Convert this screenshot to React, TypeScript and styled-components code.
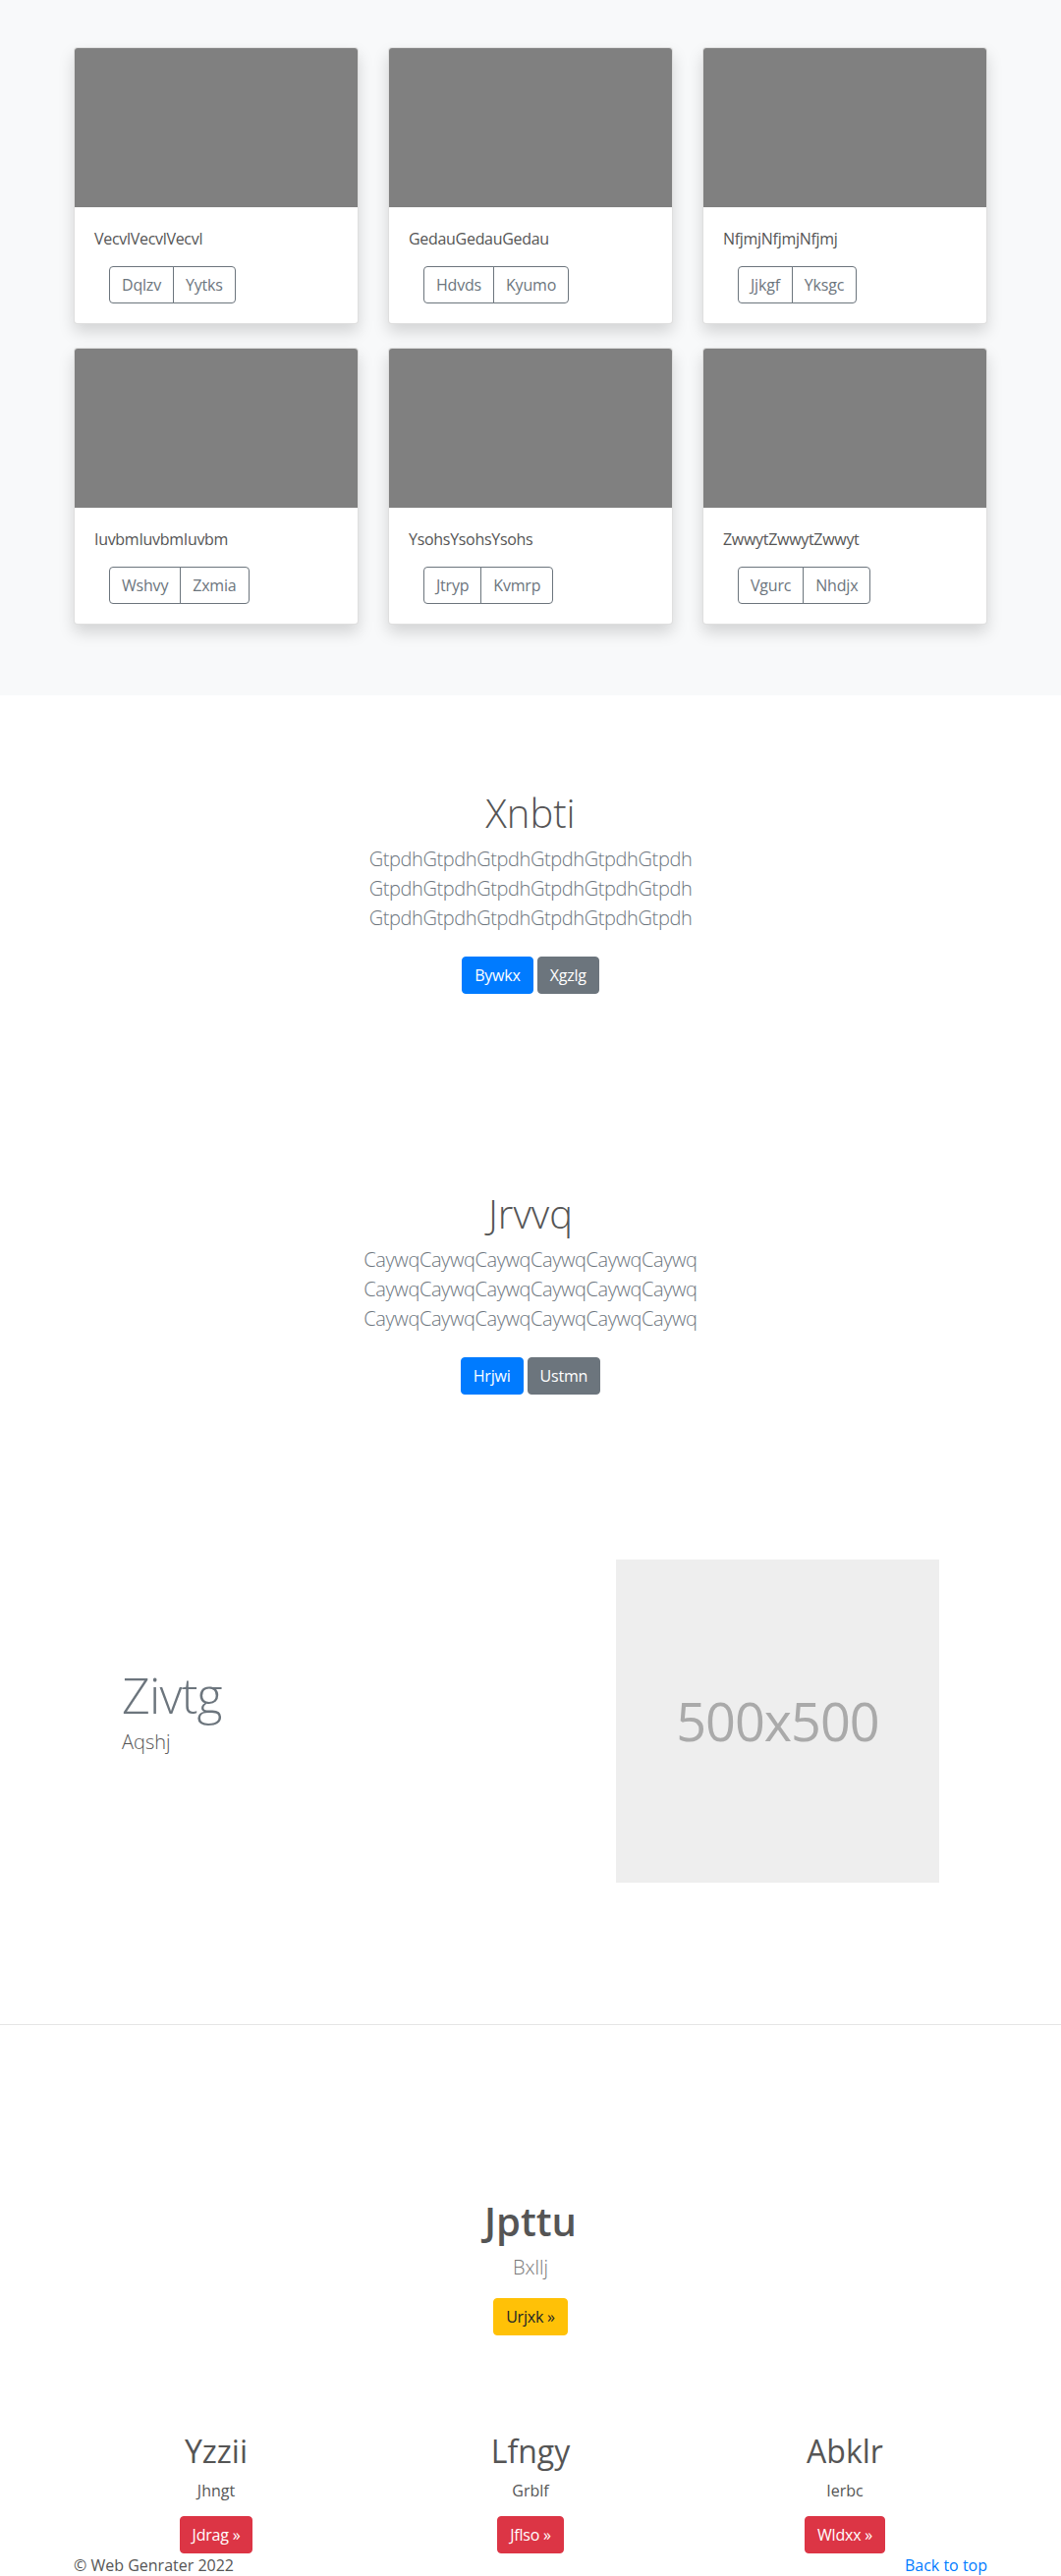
import React from "react";
import styled, { createGlobalStyle } from "styled-components";

const GlobalStyle = createGlobalStyle`
  html, body { margin: 0; padding: 0; background: #fff; }
  body {
    font-family: "Open Sans", "Noto Sans", "Liberation Sans", sans-serif;
    font-size: 16px;
    line-height: 1.5;
    color: #555;
  }
  * { box-sizing: border-box; }
`;

const Page = styled.div`
  display: flex;
  flex-direction: column;
`;

const Album = styled.section`
  background: #f8f9fa;
  padding: 48px 0 72px;
`;

const Container = styled.div`
  width: 100%;
  max-width: 960px;
  margin: 0 auto;
  padding: 0 15px;
`;

const CardGrid = styled.div`
  display: grid;
  grid-template-columns: repeat(3, 1fr);
  column-gap: 30px;
  row-gap: 24px;
`;

const Card = styled.div`
  display: flex;
  flex-direction: column;
  background: #fff;
  border: 1px solid rgba(0, 0, 0, 0.125);
  border-radius: 4px;
  overflow: hidden;
  box-shadow: 0 8px 16px rgba(0, 0, 0, 0.15);
`;

const CardImage = styled.div`
  height: 162px;
  background: #808080;
`;

const CardBody = styled.div`
  padding: 20px;
`;

const CardText = styled.p`
  margin: 0 0 16px;
  font-size: 16px;
  line-height: 24px;
  letter-spacing: -0.3px;
  color: #555;
`;

const BtnGroup = styled.div`
  display: inline-flex;
  margin-left: 15px;
`;

const GroupButton = styled.button`
  font-family: inherit;
  font-size: 16px;
  line-height: 24px;
  padding: 6px 12px;
  letter-spacing: -0.2px;
  background: transparent;
  color: #6c757d;
  border: 1px solid #6c757d;
  border-radius: 0;
  &:first-child {
    border-radius: 4px 0 0 4px;
  }
  &:last-child {
    border-radius: 0 4px 4px 0;
    margin-left: -1px;
  }
`;

const Hero = styled.section`
  padding: 96px 0;
  text-align: center;
`;

const HeroTitle = styled.h1`
  margin: 0 0 8px;
  font-size: 40px;
  font-weight: 300;
  line-height: 1.2;
  color: #555;
`;

const Lead = styled.p`
  margin: 0 0 16px;
  font-size: 20px;
  font-weight: 300;
  line-height: 30px;
  letter-spacing: -0.4px;
  color: #6c757d;
`;

const ButtonRow = styled.div`
  display: flex;
  justify-content: center;
  gap: 4px;
  padding: 8px 0;
`;

const variants: Record<string, { bg: string; fg: string }> = {
  primary: { bg: "#007bff", fg: "#fff" },
  secondary: { bg: "#6c757d", fg: "#fff" },
  warning: { bg: "#ffc107", fg: "#212529" },
  danger: { bg: "#dc3545", fg: "#fff" },
};

const Button = styled.a<{ $variant: string }>`
  display: inline-block;
  font-size: 16px;
  line-height: 24px;
  padding: 6px 12px;
  letter-spacing: -0.2px;
  border-radius: 4px;
  border: 1px solid ${(p) => variants[p.$variant].bg};
  background: ${(p) => variants[p.$variant].bg};
  color: ${(p) => variants[p.$variant].fg};
  text-decoration: none;
`;

const Featurette = styled.section`
  padding: 64px 0;
`;

const FeatureRow = styled.div`
  width: 862px;
  margin: 0 auto;
  display: grid;
  grid-template-columns: 7fr 5fr;
  align-items: center;
`;

const FeatureText = styled.div`
  padding: 0 15px;
`;

const FeatureHeading = styled.h2`
  margin: 0 0 8px;
  font-size: 50px;
  font-weight: 300;
  line-height: 1;
  letter-spacing: -0.8px;
  color: #6c757d;
`;

const FeatureLead = styled.p`
  margin: 0 0 16px;
  font-size: 20px;
  font-weight: 300;
  line-height: 30px;
  color: #555;
`;

const FeatureMedia = styled.div`
  padding: 0 15px;
`;

const Placeholder = styled.div`
  aspect-ratio: 1 / 1;
  width: 100%;
  background: #eee;
  color: #aaa;
  display: flex;
  align-items: center;
  justify-content: center;
  font-size: 54px;
  letter-spacing: -1px;
`;

const Divider = styled.hr`
  margin: 80px 0;
  border: 0;
  border-top: 1px solid #e5e5e5;
  height: 0;
`;

const CallToAction = styled.section`
  padding-top: 96px;
  text-align: center;
`;

const CtaTitle = styled.h1`
  margin: 0 0 8px;
  font-size: 40px;
  font-weight: 600;
  line-height: 1.2;
  color: #555;
`;

const CtaLead = styled.p`
  margin: 0 0 16px;
  font-size: 20px;
  font-weight: 300;
  line-height: 30px;
  color: #777;
`;

const ColumnsGrid = styled.div`
  display: grid;
  grid-template-columns: repeat(3, 1fr);
  margin: 99px -15px 0;
`;

const Column = styled.div`
  padding: 0 15px;
  text-align: center;
`;

const ColumnTitle = styled.h2`
  margin: 0 0 8px;
  font-size: 32px;
  font-weight: 500;
  line-height: 1.2;
  color: #555;
`;

const ColumnText = styled.p`
  margin: 0 0 14px;
  font-size: 16px;
  line-height: 24px;
  color: #555;
`;

const Footer = styled.footer`
  display: flex;
  justify-content: space-between;
  font-size: 16px;
  line-height: 24px;
  color: #555;
`;

const FooterLink = styled.a`
  color: #007bff;
  text-decoration: none;
`;

const cards = [
  { title: "VecvlVecvlVecvl", a: "Dqlzv", b: "Yytks" },
  { title: "GedauGedauGedau", a: "Hdvds", b: "Kyumo" },
  { title: "NfjmjNfjmjNfjmj", a: "Jjkgf", b: "Yksgc" },
  { title: "IuvbmIuvbmIuvbm", a: "Wshvy", b: "Zxmia" },
  { title: "YsohsYsohsYsohs", a: "Jtryp", b: "Kvmrp" },
  { title: "ZwwytZwwytZwwyt", a: "Vgurc", b: "Nhdjx" },
];

const heroes = [
  { title: "Xnbti", line: "GtpdhGtpdhGtpdhGtpdhGtpdhGtpdh", a: "Bywkx", b: "Xgzlg" },
  { title: "Jrvvq", line: "CaywqCaywqCaywqCaywqCaywqCaywq", a: "Hrjwi", b: "Ustmn" },
];

const columns = [
  { title: "Yzzii", text: "Jhngt", btn: "Jdrag »" },
  { title: "Lfngy", text: "Grblf", btn: "Jflso »" },
  { title: "Abklr", text: "Ierbc", btn: "Wldxx »" },
];

export default function App() {
  return (
    <Page>
      <GlobalStyle />
      <Album>
        <Container>
          <CardGrid>
            {cards.map((c) => (
              <Card key={c.title}>
                <CardImage />
                <CardBody>
                  <CardText>{c.title}</CardText>
                  <BtnGroup>
                    <GroupButton>{c.a}</GroupButton>
                    <GroupButton>{c.b}</GroupButton>
                  </BtnGroup>
                </CardBody>
              </Card>
            ))}
          </CardGrid>
        </Container>
      </Album>

      {heroes.map((h) => (
        <Hero key={h.title}>
          <Container>
            <HeroTitle>{h.title}</HeroTitle>
            <Lead>
              {h.line}
              <br />
              {h.line}
              <br />
              {h.line}
            </Lead>
            <ButtonRow>
              <Button $variant="primary" href="#">{h.a}</Button>
              <Button $variant="secondary" href="#">{h.b}</Button>
            </ButtonRow>
          </Container>
        </Hero>
      ))}

      <Featurette>
        <FeatureRow>
          <FeatureText>
            <FeatureHeading>Zivtg</FeatureHeading>
            <FeatureLead>Aqshj</FeatureLead>
          </FeatureText>
          <FeatureMedia>
            <Placeholder>500x500</Placeholder>
          </FeatureMedia>
        </FeatureRow>
      </Featurette>

      <Divider />

      <CallToAction>
        <Container>
          <CtaTitle>Jpttu</CtaTitle>
          <CtaLead>Bxllj</CtaLead>
          <Button $variant="warning" href="#">Urjxk »</Button>
          <ColumnsGrid>
            {columns.map((c) => (
              <Column key={c.title}>
                <ColumnTitle>{c.title}</ColumnTitle>
                <ColumnText>{c.text}</ColumnText>
                <Button $variant="danger" href="#">{c.btn}</Button>
              </Column>
            ))}
          </ColumnsGrid>
          <Footer>
            <span>© Web Genrater 2022</span>
            <FooterLink href="#">Back to top</FooterLink>
          </Footer>
        </Container>
      </CallToAction>
    </Page>
  );
}
